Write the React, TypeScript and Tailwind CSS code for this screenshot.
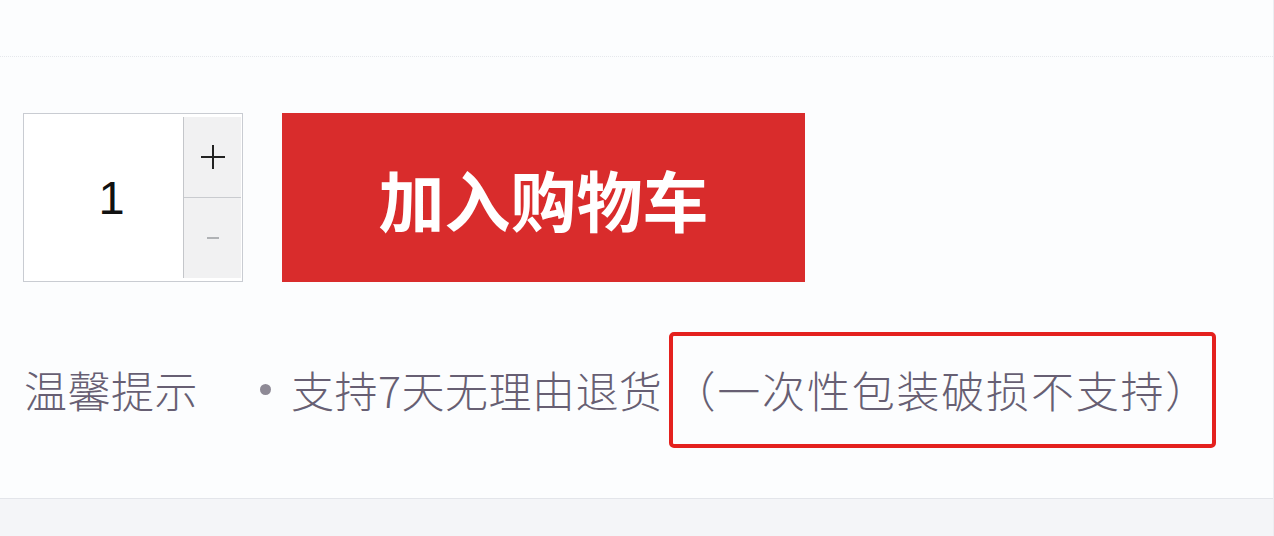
export default function App() {
  const font = { fontFamily: '"Noto Sans CJK SC", "Noto Sans", sans-serif' };
  return (
    <div
      className="w-[1274px] h-[536px] bg-[#fcfdfe] flex flex-col border-r border-[#eceef2] overflow-hidden"
      style={font}
    >
      {/* header strip */}
      <div className="h-[57px] shrink-0 border-b border-dotted border-[#e6e8ec]" />

      <div className="flex-1 flex flex-col pl-[23px]">
        {/* quantity + cart */}
        <div className="flex items-stretch mt-[56px] h-[169px]">
          <div className="w-[220px] flex border border-[#c9ccd2] bg-white">
            <div className="flex-1 flex items-center justify-center pl-[16px] pt-[2px] text-[47px] text-[#111] font-['Liberation_Sans',sans-serif]">
              1
            </div>
            <div className="w-[58px] flex flex-col border-l border-[#c4c6ca] my-[3px] mr-[1px] bg-[#f1f1f2]">
              <div className="flex-1 flex items-center justify-center border-b border-[#c9cbcf] text-[#222]">
                <svg width="26" height="26" viewBox="0 0 26 26">
                  <path d="M13 1v24M1 13h24" stroke="#222" strokeWidth="2" />
                </svg>
              </div>
              <div className="flex-1 flex items-center justify-center">
                <svg width="14" height="4" viewBox="0 0 14 4">
                  <path d="M1 2h12" stroke="#9a9ca0" strokeWidth="1.5" />
                </svg>
              </div>
            </div>
          </div>
          <button className="ml-[39px] w-[523px] bg-[#d92c2c] text-white text-[66px] font-bold flex items-center justify-center leading-none">
            加入购物车
          </button>
        </div>

        {/* tip row */}
        <div className="flex items-center mt-[50px] h-[115px] text-[43px] text-[#675f73] font-extralight leading-none">
          <span className="w-[237px] pl-[1px] tracking-[0.5px]">温馨提示</span>
          <span className="w-[11px] h-[11px] rounded-full bg-[#8e8a96] mr-[20px]" />
          <span className="tracking-[0.5px]">支持7天无理由退货</span>
          <span className="h-[116px] ml-[6px] border-[4px] border-[#e4211e] rounded-[5px] flex items-center pr-[2px] pl-[0px] tracking-[1.8px]">
            （一次性包装破损不支持）
          </span>
        </div>

        <div className="flex-1" />
      </div>

      {/* bottom strip */}
      <div className="h-[38px] shrink-0 border-t border-[#e3e5ea] bg-[#f4f5f8]" />
    </div>
  );
}
